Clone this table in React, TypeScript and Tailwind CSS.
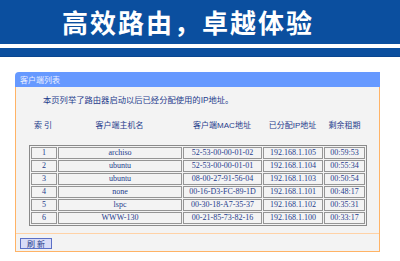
import React from "react";

const rows = [
  ["1", "archiso", "52-53-00-00-01-02", "192.168.1.105", "00:59:53"],
  ["2", "ubuntu", "52-53-00-00-01-01", "192.168.1.104", "00:55:34"],
  ["3", "ubuntu", "08-00-27-91-56-04", "192.168.1.103", "00:50:54"],
  ["4", "none", "00-16-D3-FC-89-1D", "192.168.1.101", "00:48:17"],
  ["5", "lspc", "00-30-18-A7-35-37", "192.168.1.102", "00:35:31"],
  ["6", "WWW-130", "00-21-85-73-82-16", "192.168.1.100", "00:33:17"],
];

const widths = ["w-[26px]", "w-[124px]", "w-[79px]", "w-[60px]", "w-[41px]"];

export default function App() {
  return (
    <div className="w-[400px] h-[261px] bg-white overflow-hidden">
      <div className="h-[44px] bg-[#0b4f9f] flex items-center pl-[62px]">
        <span
          className="text-white font-bold text-[26px] leading-none tracking-[2px]"
          style={{ fontFamily: '"Noto Sans CJK SC", sans-serif' }}
        >
          高效路由，卓越体验
        </span>
      </div>
      <div className="h-[4px] bg-white" />
      <div className="h-[9px] bg-[#0b4f9f] border-b border-[#0a4690]" />
      <div className="pt-[15px] pl-[15px]">
        <div className="w-[365px]">
          <div
            className="h-[15px] bg-[#6699ff] rounded-tl-[4px] flex items-center pl-[5px] text-[8px] text-[#e8eeff]"
            style={{ fontFamily: '"Noto Sans CJK SC", sans-serif' }}
          >
            客户端列表
          </div>
          <div className="border-x border-b border-[#ffb366] bg-[#f3f3f3]">
            <div className="h-[146px] pt-[7px]">
              <div
                className="h-[12px] leading-[12px] pl-[27px] text-[8.3px] text-[#1f3c8c]"
                style={{ fontFamily: '"Liberation Sans", "Noto Sans CJK SC", sans-serif' }}
              >
                本页列举了路由器启动以后已经分配使用的IP地址。
              </div>
              <div
                className="mt-[14px] h-[12px] flex items-center pl-[13px] text-[8px] text-[#1f3c8c]"
                style={{ fontFamily: '"Liberation Sans", "Noto Sans CJK SC", sans-serif' }}
              >
                <div className="w-[28px] text-center">索 引</div>
                <div className="w-[125px] text-center">客户端主机名</div>
                <div className="w-[80px] text-center">客户端MAC地址</div>
                <div className="w-[61px] text-center">已分配IP地址</div>
                <div className="w-[43px] text-center">剩余租期</div>
              </div>
              <div className="mt-[13px] pl-[13px]">
                <table
                  className="table-fixed border-separate border-spacing-[1px] border border-[#8a8a8a] text-[8px] text-[#1f3c8c]"
                  style={{ fontFamily: '"Liberation Serif", "Noto Sans CJK SC", serif' }}
                >
                  <tbody>
                    {rows.map((r, i) => (
                      <tr key={i}>
                        {r.map((c, j) => (
                          <td
                            key={j}
                            className={`${widths[j]} h-[12px] p-0 leading-[10px] text-center border border-[#959595] bg-[#f3f3f3]`}
                          >
                            {c}
                          </td>
                        ))}
                      </tr>
                    ))}
                  </tbody>
                </table>
              </div>
            </div>
            <div className="h-[18px] border-t border-[#ffd2a6] pt-[4px] pl-[4px]">
              <button
                className="w-[32px] h-[11px] bg-[#d9dcf7] border border-[#5b6fc6] text-[8px] leading-[9px] text-[#1f3c8c] flex items-center justify-center"
                style={{ fontFamily: '"Noto Sans CJK SC", sans-serif' }}
              >
                刷 新
              </button>
            </div>
          </div>
        </div>
      </div>
    </div>
  );
}
